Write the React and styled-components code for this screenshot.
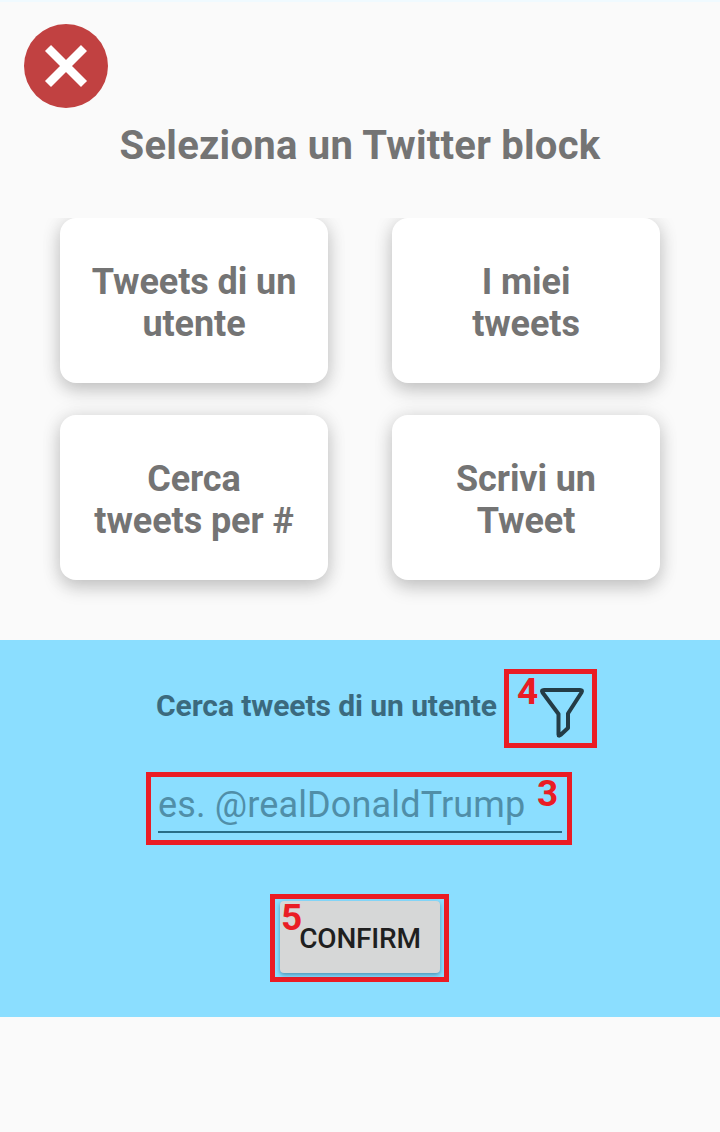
import React from "react";
import styled, { createGlobalStyle } from "styled-components";

const Global = createGlobalStyle`
  *{box-sizing:border-box}
  body{margin:0;background:#fafafa;font-family:Roboto,"Liberation Sans",sans-serif;color:#747474}
`;
const Screen = styled.main`
  width:720px;height:1132px;overflow:hidden;display:flex;flex-direction:column;
  border-top:2px solid #f0faff;
`;
const Header = styled.header`
  height:216px;padding:22px 24px 0;
`;
const CloseButton = styled.button`
  width:84px;height:84px;border:0;padding:0;border-radius:50%;background:#c14141;display:block;
  svg{display:block}
`;
const Title = styled.h1`
  margin:14px 0 0;font-size:40px;line-height:48px;font-weight:700;text-align:center;white-space:nowrap;
  letter-spacing:.25px;
`;
const Grid = styled.section`
  height:422px;padding:0 60px;display:grid;grid-template-columns:268px 268px;grid-auto-rows:165px;
  gap:32px 64px;align-content:start;overflow:hidden;
`;
const Card = styled.button`
  border:0;border-radius:16px;background:#fff;color:#747474;font:700 36px/42px Roboto,sans-serif;
  padding:4px 0 0;text-align:center;white-space:pre-line;letter-spacing:-.08px;
  box-shadow:0 8px 18px rgba(0,0,0,.18),0 0 20px rgba(0,0,0,.1);
`;
const Panel = styled.section`
  height:377px;background:#8bdeff;display:flex;flex-direction:column;align-items:center;
`;
const Heading = styled.div`
  width:720px;height:108px;padding:29px 123px 0 0;display:flex;gap:7px;justify-content:flex-end;
`;
const Label = styled.h2`
  margin:20px 0 0;font-size:30px;line-height:34px;font-weight:700;color:#3b6a7e;white-space:nowrap;
  letter-spacing:-.08px;
`;
const Mark = styled.div`
  border:5px solid #ea1c24;position:relative;
  width:${p => p.$w}px;height:${p => p.$h}px;
`;
const Num = styled.span`
  position:absolute;left:${p => p.$x}px;top:${p => p.$y}px;font:700 37px/42px Roboto,sans-serif;color:#ea1c24;
`;
const Funnel = styled.svg`
  display:block;margin:10px 0 0 30px;
`;
const FieldWrap = styled.div`
  margin:24px 2px 0 0;
`;
const Field = styled.div`
  margin:7px 5px 0 7px;height:49px;border-bottom:2px solid #286d87;
  font-size:36px;line-height:42px;color:#508ea8;white-space:nowrap;letter-spacing:.15px;
`;
const ConfirmWrap = styled.div`
  margin:49px 1px 0 0;
`;
const Confirm = styled.button`
  display:block;margin:2px 0 0 5px;width:160px;height:72px;border:0;border-radius:4px;padding:3px 0 0;
  background:#d6d7d7;color:#1f1f1f;font:500 28px/34px Roboto,sans-serif;letter-spacing:-.2px;
  box-shadow:0 2px 4px rgba(0,60,90,.45);
`;
const cards = ["Tweets di un\nutente", "I miei\ntweets", "Cerca\ntweets per #", "Scrivi un\nTweet"];

export default function App() {
  return (
    <Screen>
      <Global />
      <Header>
        <CloseButton aria-label="Chiudi">
          <svg width="84" height="84" viewBox="0 0 84 84">
            <path d="M24 24L60 60M60 24L24 60" stroke="#fff" strokeWidth="8.5" />
          </svg>
        </CloseButton>
        <Title>Seleziona un Twitter block</Title>
      </Header>
      <Grid>{cards.map(c => <Card key={c}>{c}</Card>)}</Grid>
      <Panel>
        <Heading>
          <Label>Cerca tweets di un utente</Label>
          <Mark $w={93} $h={79}>
            <Funnel width="50" height="56" viewBox="0 0 50 56" fill="none">
              <path d="M5 6H41Q44 6 42.5 8.5L29 29.5V44L21.5 51Q19.500 52.5 19.500 50.500V30L3.5 8.5Q2 6 5 6Z" stroke="#243c46" strokeWidth="4" strokeLinejoin="round" />
            </Funnel>
            <Num $x={8} $y={-3}>4</Num>
          </Mark>
        </Heading>
        <FieldWrap>
          <Mark $w={426} $h={73}>
            <Field>es. @realDonaldTrump</Field>
            <Num $x={386} $y={-4}>3</Num>
          </Mark>
        </FieldWrap>
        <ConfirmWrap>
          <Mark $w={179} $h={88}>
            <Confirm>CONFIRM</Confirm>
            <Num $x={6} $y={-2}>5</Num>
          </Mark>
        </ConfirmWrap>
      </Panel>
    </Screen>
  );
}
